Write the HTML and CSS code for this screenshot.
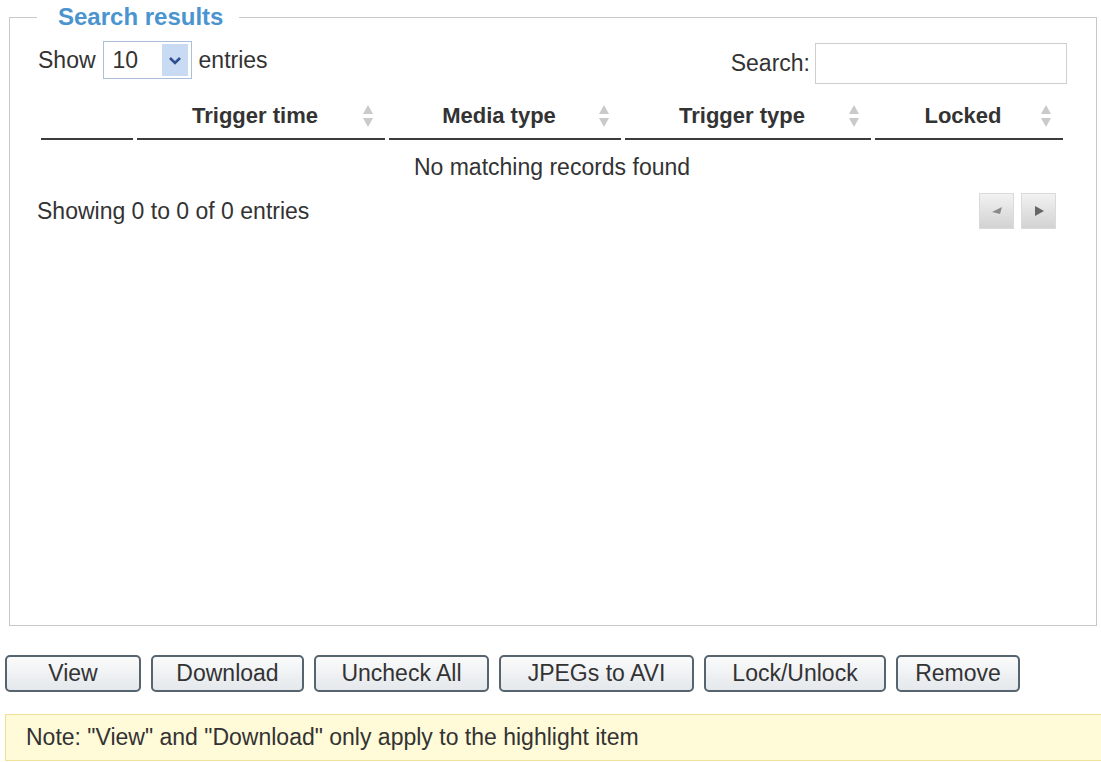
FILE: index.html
```html
<!DOCTYPE html>
<html lang="en">
<head>
    <meta charset="UTF-8">
    <meta name="viewport" content="width=device-width, initial-scale=1.0">
    <title>Search results</title>
    <link rel="stylesheet" href="styles.css">
</head>
<body>
    <fieldset class="results">
        <legend>Search results</legend>

        <div class="toolbar">
            <div class="length">
                <span>Show</span>
                <div class="select">
                    <span class="select-value">10</span>
                    <span class="select-arrow">
                        <svg width="14" height="9" viewBox="0 0 14 9"><polyline points="2,2 7,7 12,2" fill="none" stroke="#2f4f92" stroke-width="2.6"/></svg>
                    </span>
                </div>
                <span>entries</span>
            </div>
            <label class="filter" for="search">Search:
                <input type="text" id="search" name="search">
            </label>
        </div>

        <table class="grid">
            <colgroup>
                <col class="col-check">
                <col class="col-time">
                <col class="col-media">
                <col class="col-trigger">
                <col class="col-locked">
            </colgroup>
            <thead>
                <tr>
                    <th></th>
                    <th>Trigger time
                        <svg class="sort-icon" width="12" height="24" viewBox="0 0 12 24"><polygon points="6,1 11,10 1,10"/><polygon points="1,14 11,14 6,23"/></svg>
                    </th>
                    <th>Media type
                        <svg class="sort-icon" width="12" height="24" viewBox="0 0 12 24"><polygon points="6,1 11,10 1,10"/><polygon points="1,14 11,14 6,23"/></svg>
                    </th>
                    <th>Trigger type
                        <svg class="sort-icon" width="12" height="24" viewBox="0 0 12 24"><polygon points="6,1 11,10 1,10"/><polygon points="1,14 11,14 6,23"/></svg>
                    </th>
                    <th>Locked
                        <svg class="sort-icon" width="12" height="24" viewBox="0 0 12 24"><polygon points="6,1 11,10 1,10"/><polygon points="1,14 11,14 6,23"/></svg>
                    </th>
                </tr>
            </thead>
            <tbody>
                <tr>
                    <td colspan="5" class="empty">No matching records found</td>
                </tr>
            </tbody>
        </table>

        <div class="info-row">
            <span>Showing 0 to 0 of 0 entries</span>
            <div class="paging">
                <button type="button" class="page-btn">
                    <svg width="14" height="12" viewBox="0 0 14 12"><polygon points="2,7 12,2 10,9" fill="#8a8a8a"/></svg>
                </button>
                <button type="button" class="page-btn">
                    <svg width="12" height="12" viewBox="0 0 12 12"><polygon points="2,1 11,6 2,11" fill="#666"/></svg>
                </button>
            </div>
        </div>
    </fieldset>

    <div class="actions">
        <button type="button" class="btn btn-view">View</button>
        <button type="button" class="btn btn-download">Download</button>
        <button type="button" class="btn btn-uncheck">Uncheck All</button>
        <button type="button" class="btn btn-avi">JPEGs to AVI</button>
        <button type="button" class="btn btn-lock">Lock/Unlock</button>
        <button type="button" class="btn btn-remove">Remove</button>
    </div>

    <div class="note">Note: "View" and "Download" only apply to the highlight item</div>
</body>
</html>
```

FILE: styles.css
```css
/* Recording search results panel */
body {
    margin: 0;
    font-family: 'Liberation Sans', Arial, sans-serif;
    font-size: 23px;
    color: #333;
    background-color: #fff;
    overflow: hidden;
}

.results {
    box-sizing: border-box;
    width: 1088px;
    height: 623px;
    margin: 3px 0 0 9px;
    padding: 10px 29px 0 27px;
    border: 1px solid #c8c8c8;
}

.results legend {
    padding: 0 16px 0 21px;
    font-size: 24px;
    font-weight: bold;
    line-height: 28px;
    color: #4a94d0;
}

.toolbar {
    display: flex;
    justify-content: space-between;
    align-items: flex-start;
    height: 43px;
}

.length {
    display: flex;
    align-items: center;
    gap: 7px;
    height: 38px;
    margin-left: 1px;
}

.select {
    display: flex;
    align-items: stretch;
    box-sizing: border-box;
    width: 89px;
    height: 38px;
    padding: 2px 3px 2px 9px;
    border: 1px solid #a9bfdc;
}

.select-value {
    flex: 1;
    line-height: 32px;
}

.select-arrow {
    display: flex;
    align-items: center;
    justify-content: center;
    width: 26px;
    background-color: #c9daf3;
}

.filter {
    display: flex;
    align-items: center;
    gap: 5px;
    margin-top: 2px;
}

.filter input {
    box-sizing: border-box;
    width: 252px;
    height: 41px;
    padding: 0 5px;
    border: 1px solid #cfcfcf;
    font: inherit;
}

.grid {
    width: 100%;
    margin-top: 10px;
    border-spacing: 4px 0;
    table-layout: fixed;
}

.col-check { width: 92px; }
.col-time { width: 248px; }
.col-media { width: 232px; }
.col-trigger { width: 246px; }
.col-locked { width: 188px; }

.grid th {
    position: relative;
    padding: 9px 12px 10px 0;
    border-bottom: 2px solid #3c3c3c;
    font-size: 22px;
    font-weight: bold;
    line-height: 25px;
    text-align: center;
}

.sort-icon {
    position: absolute;
    right: 11px;
    top: 50%;
    margin-top: -12px;
    fill: #cacaca;
}

.empty {
    padding: 15px 0 12px;
    line-height: 25px;
    text-align: center;
}

.info-row {
    display: flex;
    justify-content: space-between;
    align-items: center;
    margin-top: 1px;
}

.paging {
    display: flex;
    gap: 7px;
    margin-right: 11px;
}

.page-btn {
    display: flex;
    align-items: center;
    justify-content: center;
    width: 35px;
    height: 36px;
    padding: 0;
    border: 1px solid #dadada;
    background: linear-gradient(#f2f2f2, #d2d2d2);
}

.actions {
    display: flex;
    gap: 10px;
    margin: 29px 0 0 5px;
}

.btn {
    box-sizing: border-box;
    height: 37px;
    padding: 0;
    border: 2px solid #56646f;
    border-radius: 5px;
    background: linear-gradient(#fbfbfb, #e4e8ec);
    font-family: 'Liberation Sans', Arial, sans-serif;
    font-size: 23px;
    color: #333;
}

.btn-view { width: 136px; }
.btn-download { width: 153px; }
.btn-uncheck { width: 175px; }
.btn-avi { width: 195px; }
.btn-lock { width: 182px; }
.btn-remove { width: 124px; }

.note {
    margin: 22px -10px 0 5px;
    padding: 10px 0 10px 20px;
    border: 1px solid #eee29a;
    background-color: #fffbd8;
    line-height: 25px;
}
```
